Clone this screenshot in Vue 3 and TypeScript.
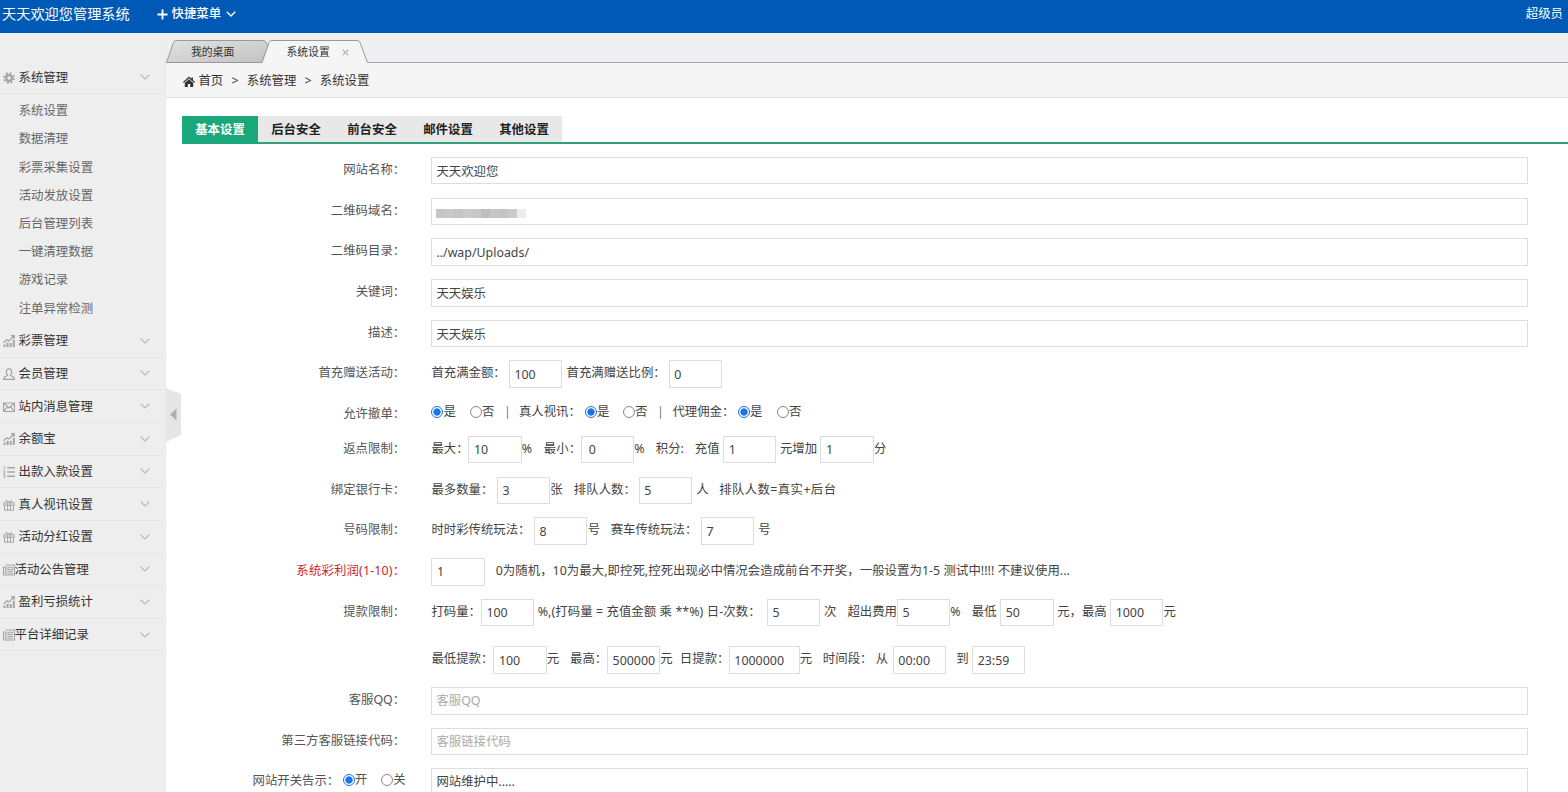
<script setup lang="ts">
type Part =
  | { k: 't'; v: string; w?: number; s?: number }
  | { k: 'i'; v: string; w: number; pad?: number; gap?: number }
  | { k: 'r'; on: boolean; v: string; w: number }
interface Row { label: string; cls?: string; full?: string; hint?: string; parts?: Part[]; mosaic?: boolean; sw?: boolean }

const t = (v: string, w?: number, s?: number): Part => ({ k: 't', v, w, s })
const i = (v: string, gap = 0, w = 53.3, pad = 4.5): Part => ({ k: 'i', v, w, pad, gap })
const r = (on: boolean, v: string, w: number): Part => ({ k: 'r', on, v, w })
const textStyle = (p: { w?: number; s?: number }) => ({
  width: p.w ? p.w + 'px' : undefined,
  letterSpacing: p.s ? p.s + 'px' : undefined,
})

const rows: Row[] = [
  { label: '网站名称：', full: '天天欢迎您' },
  { label: '二维码域名：', full: '', mosaic: true },
  { label: '二维码目录：', full: '../wap/Uploads/' },
  { label: '关键词：', full: '天天娱乐' },
  { label: '描述：', full: '天天娱乐' },
  { label: '首充赠送活动：', parts: [t('首充满金额：', 77.5), i('100', 4.4), t('首充满赠送比例：', 102.2), i('0')] },
  { label: '允许撤单：', cls: 'radio-row', parts: [
    r(true, '是', 38.5), r(false, '否', 34), t('|', 15), t('真人视讯：', 66),
    r(true, '是', 38), r(false, '否', 34), t('|', 15.5), t('代理佣金：', 65.5),
    r(true, '是', 39), r(false, '否', 30)] },
  { label: '返点限制：', parts: [t('最大：', 37), i('10'), t('%', 22.2), t('最小：', 37), i('0', 0, 53.3, 7), t('%', 21.7), t('积分:', 39), t('充值', 28.3), i('1', 3.5), t('元增加', 40.5), i('1', 0.2), t('分')] },
  { label: '绑定银行卡：', parts: [t('最多数量：', 65.5), i('3'), t('张', 23.7), t('排队人数：', 65), i('5', 4), t('人', 23), t('排队人数=真实+后台', undefined, 0.4)] },
  { label: '号码限制：', parts: [t('时时彩传统玩法：', 102.5), i('8', 0.5), t('号', 23), t('赛车传统玩法：', 90.3), i('7', 4), t('号')] },
  { label: '系统彩利润(1-10)：', cls: 'warn', parts: [i('1', 11), t('0为随机，10为最大,即控死,控死出现必中情况会造成前台不开奖，一般设置为1-5 测试中!!!! 不建议使用...', undefined, 0.05)] },
  { label: '提款限制：', cls: 'tall', parts: [t('打码量：', 49.5), i('100', 3.5), t('%,(打码量 = 充值金额 乘 **%) 日-次数：', 229.4, 0.08), i('5', 3.6), t('次', 23.5), t('超出费用', 49.5), i('5'), t('%', 21.5), t('最低', 28.5), i('50', 3.6), t('元，最高', 53), i('1000'), t('元')] },
  { label: '', parts: [t('最低提款：', 62), i('100'), t('元', 23.4), t('最高：', 37), i('500000'), t('元', 19.5), t('日提款：', 49), i('1000000', 0, 71), t('元', 23), t('时间段：', 53), t('从', 17), i('00:00', 10), t('到', 16), i('23:59')] },
  { label: '客服QQ：', full: '', hint: '客服QQ' },
  { label: '第三方客服链接代码：', full: '', hint: '客服链接代码' },
  { label: '网站开关告示：', cls: 'last', full: '网站维护中.....', sw: true },
]

interface Menu { name: string; icon: string; tight?: boolean; sub?: string[] }
const menus: Menu[] = [
  { name: '系统管理', icon: 'gear', sub: ['系统设置', '数据清理', '彩票采集设置', '活动发放设置', '后台管理列表', '一键清理数据', '游戏记录', '注单异常检测'] },
  { name: '彩票管理', icon: 'chart' },
  { name: '会员管理', icon: 'user' },
  { name: '站内消息管理', icon: 'mail' },
  { name: '余额宝', icon: 'chart' },
  { name: '出款入款设置', icon: 'list' },
  { name: '真人视讯设置', icon: 'gift' },
  { name: '活动分红设置', icon: 'gift' },
  { name: '活动公告管理', icon: 'news', tight: true },
  { name: '盈利亏损统计', icon: 'chart' },
  { name: '平台详细记录', icon: 'news', tight: true },
]
const tabs = ['基本设置', '后台安全', '前台安全', '邮件设置', '其他设置']
const mosaic = ['#c6c6c6', '#c9c9c9', '#c4c4c4', '#cacaca', '#c8c8c8', '#bdbdbd', '#c6c6c6', '#c3c3c3', '#cbcbcb', '#ececec']
</script>

<template>
  <div class="page">
    <header class="top">
      <span class="brand">天天欢迎您管理系统</span>
      <svg class="plus" viewBox="0 0 11 11"><path d="M5.5 .5v10M.5 5.5h10" /></svg>
      <b class="quick">快捷菜单</b>
      <svg class="caret" viewBox="0 0 10 6"><path d="M.8 .8L5 5 9.2 .8" /></svg>
      <span class="who">超级员</span>
    </header>
    <div class="body">
      <aside class="side">
        <template v-for="m in menus" :key="m.name">
          <div class="menu" :class="{ tight: m.tight }">
            <svg class="mi" viewBox="0 0 12 12">
              <template v-if="m.icon === 'gear'">
                <circle cx="6" cy="6" r="2.9" stroke-width="2.4" />
                <circle cx="6" cy="6" r="4.9" stroke-width="2" stroke-dasharray="1.9 1.95" />
              </template>
              <template v-else-if="m.icon === 'chart'">
                <path d="M1.5 12V9.4M4.6 12V7.8M7.7 12V8M10.8 12V4.8" stroke-width="2" />
                <path d="M.5 7.8L4 4.8 6 6 10.8 1M8 .7h3.2v3.1" stroke-width="1.2" />
              </template>
              <path v-else-if="m.icon === 'user'" stroke-width="1.2" d="M4.6 7.2C2.4 5 3 .8 6 .8s3.6 4.2 1.4 6.4c.2 1 3.9 1 4.1 4.1H.5c.2-3.1 3.9-3.1 4.1-4.1z" />
              <path v-else-if="m.icon === 'mail'" stroke-width="1.2" d="M.5 2h11v8.5H.5zM.8 2.3L6 6.8l5.2-4.5M.8 10.2L4.4 6M11.2 10.2L7.6 6" />
              <template v-else-if="m.icon === 'list'">
                <path d="M4.2 1.8H12M4.2 6H12M4.2 10.2H12" stroke-width="1.5" />
                <path d="M.6 .7h1v2.8M.3 5h1.6v.8L.5 7.3h1.6M.4 8.7h1.5v2.6H.4M.9 10h1" stroke-width=".9" />
              </template>
              <path v-else-if="m.icon === 'gift'" d="M.7 3.7h10.6v2.5H.7zM1.5 6.2v5h9v-5M4.6 3.7v7.5M7.4 3.7v7.5M5.8 3.5C4.5.5 2.7 1 3.2 3.2M6.2 3.5C7.5.5 9.3 1 8.8 3.2" />
              <template v-else>
                <path d="M2.8 1h8.7v10H1.3Q.5 11 .5 10V3h2.3v7" stroke-width="1.2" />
                <path d="M4.9 3.3h4.7v2.2H4.9zM4.4 7.4h5.4M4.4 9.2h5.4" />
              </template>
            </svg>
            <span>{{ m.name }}</span>
            <svg class="down" viewBox="0 0 10 6"><path d="M.7 .8L5 5 9.3 .8" /></svg>
          </div>
          <ul v-if="m.sub" class="sub"><li v-for="s in m.sub" :key="s">{{ s }}</li></ul>
        </template>
        <svg class="toggle" viewBox="0 0 15 54"><path d="M0 0L15 6V47L0 54z" fill="#e6e6e6" /><path d="M10.5 20.5v12L4 26.5z" fill="#b0b0b0" /></svg>
      </aside>
      <main class="main">
        <div class="wins">
          <svg class="tabshape" viewBox="0 0 220 30">
            <defs><linearGradient id="g" x1="0" y1="0" x2="1" y2="1"><stop offset="0" stop-color="#e2e2e2" /><stop offset="1" stop-color="#c2c2c2" /></linearGradient></defs>
            <path d="M.5 29.5L7.5 9.5Q8.3 7.5 10.5 7.5H97Q99.5 7.5 100.5 10L102 14 96 29.5z" fill="url(#g)" stroke="#999" />
            <path d="M96 30L103 9.5Q104 7.5 106 7.5H191Q193.2 7.5 194 9.5L201.5 30z" fill="#f5f5f5" />
            <path d="M96 29.5L103 9.5Q104 7.5 106 7.5H191Q193.2 7.5 194 9.5L201.5 29.5" fill="none" stroke="#999" />
          </svg>
          <span class="win a">我的桌面</span><span class="win b">系统设置</span>
          <svg class="x" viewBox="0 0 7 7"><path d="M.7 .7l5.6 5.6M6.3 .7L.7 6.3" /></svg>
        </div>
        <nav class="crumb">
          <svg class="home" viewBox="0 0 12 11"><path d="M6 .5L0 6.1l.8.8L6 2.2l5.2 4.7.8-.8-2-1.9V1.5H8.5v1.3z" /><path d="M6 3.2L1.8 7v4h3V8h2.4v3h3V7z" /></svg>
          <span>首页</span><span class="gt">&gt;</span><span>系统管理</span><span class="gt">&gt;</span><span>系统设置</span>
        </nav>
        <div class="tabs"><b v-for="(n, x) in tabs" :key="n" :class="{ on: x === 0 }">{{ n }}</b></div>
        <form class="form">
          <div v-for="(row, n) in rows" :key="n" class="row" :class="row.cls">
            <div class="label" :class="{ sw: row.sw }">
              <span>{{ row.label }}</span>
              <template v-if="row.sw">
                <label class="radio first"><input type="radio" name="site" checked />开</label>
                <label class="radio"><input type="radio" name="site" />关</label>
              </template>
            </div>
            <div v-if="row.parts" class="parts">
              <template v-for="(p, j) in row.parts" :key="j">
                <span v-if="p.k === 't'" class="txt" :class="{ bar: p.v === '|' }" :style="textStyle(p)">{{ p.v }}</span>
                <input v-else-if="p.k === 'i'" class="box" :value="p.v" :style="{ width: p.w + 'px', paddingLeft: p.pad + 'px', marginRight: p.gap + 'px' }" />
                <label v-else class="radio" :style="{ width: p.w + 'px' }"><input type="radio" :checked="p.on" />{{ p.v }}</label>
              </template>
            </div>
            <div v-else class="wide">
              <input class="box full" :value="row.full" :placeholder="row.hint" />
              <div v-if="row.mosaic" class="mosaic"><i v-for="(c, q) in mosaic" :key="q" :style="{ background: c }"></i></div>
            </div>
          </div>
        </form>
      </main>
    </div>
  </div>
</template>

<style>
body { margin: 0; overflow: hidden; }
</style>
<style scoped>
* { box-sizing: border-box; }
.page { width: 1568px; height: 792px; overflow: hidden; background: #fff; color: #444; font: 12.4px/20px "Noto Sans", "Noto Sans CJK SC", sans-serif; display: flex; flex-direction: column; white-space: nowrap; }
svg { display: block; fill: none; flex: none; }
.top { height: 33px; flex: none; background: #005ab5; color: #fff; display: flex; align-items: center; padding: 0 5px 5px 2px; }
.brand { font-size: 14.2px; width: 154.5px; }
.plus { width: 11px; height: 11px; stroke: #fff; stroke-width: 1.8; margin-right: 4px; }
.quick { width: 54.5px; font-weight: 500; }
.caret { width: 10px; height: 6px; stroke: #fff; stroke-width: 1.4; }
.who { margin-left: auto; }
.body { flex: 1; min-height: 0; display: flex; }
.side { position: relative; width: 166px; flex: none; background: #eee; border-right: 1px solid #e8e8e8; padding-top: 28.6px; color: #333; }
.menu { height: 32.65px; width: 163px; display: flex; align-items: center; border-bottom: 1px solid #e5e5e5; padding: .9px 0 0 2.5px; }
.mi { width: 12px; height: 12px; stroke: #a4a4a4; margin-right: 4px; }
.tight .mi { margin-right: 0; }
.down { width: 10px; height: 6px; stroke: #b8b8b8; stroke-width: 1.2; margin: -1px 13px 0 auto; }
.sub { list-style: none; margin: 0; padding: 3px 0 2.3px 18.7px; color: #666; }
.sub li { height: 28.2px; line-height: 28.2px; }
.toggle { position: absolute; left: 166px; top: 355px; width: 15px; height: 54px; }
.main { flex: 1; min-width: 0; }
.wins { position: relative; height: 30px; background: #efeef0; border-bottom: 1px solid #a5a5a5; font-size: 10.8px; color: #333; }
.tabshape { position: absolute; left: 0; top: 0; width: 220px; height: 30px; }
.win { position: absolute; top: 9px; }
.a { left: 25px; }
.b { left: 120.5px; }
.x { position: absolute; left: 176px; top: 16px; width: 7px; height: 7px; stroke: #b0b0b0; stroke-width: 1.2; }
.crumb { height: 35px; background: #f5f5f5; border-bottom: 1px solid #e2e2e2; display: flex; align-items: center; padding: 2px 0 0 16.7px; color: #333; }
.home { width: 12px; height: 11px; fill: #333; margin-right: 3.8px; }
.gt { width: 23.5px; text-align: center; }
.tabs { margin: 17.5px 0 0 16px; height: 28.5px; border-bottom: 2px solid #359e7b; display: flex; }
.tabs b { width: 76px; background: #e8e8e8; text-align: center; line-height: 27px; color: #222; font-weight: 700; }
.tabs .on { background: #1aa87b; color: #fff; height: 28px; }
.form { padding-top: 12.9px; }
.row { height: 40.73px; display: flex; align-items: flex-start; }
.radio-row { height: 34.65px; }
.tall { height: 47.6px; }
.label { width: 239.2px; margin-right: 26.2px; text-align: right; color: #555; line-height: 26px; flex: none; }
.warn .label { color: #cf2328; letter-spacing: .15px; }
.label.sw { display: flex; padding-left: 86.5px; line-height: 25px; overflow: visible; }
.last { margin-top: -.5px; }
.sw .radio { height: 24px; }
.first { margin-left: 3.5px; margin-right: 14px; }
.parts { display: flex; color: #444; }
.txt { line-height: 26px; flex: none; }
.txt.bar { color: #777; }
.box { width: 53.3px; height: 27.5px; border: 1px solid #ddd; background: #fff; padding: 0 0 0 4.5px; color: #444; font: inherit; outline: 0; flex: none; }
.full { width: 1096.5px; padding-left: 4px; }
.last .full { padding-bottom: 2px; }
.box::placeholder { color: #aaa; opacity: 1; }
.wide { position: relative; }
.mosaic { position: absolute; left: 4.5px; top: 11px; display: flex; height: 9px; }
.mosaic i { width: 9px; }
.radio { display: flex; align-items: center; flex: none; height: 21px; }
.radio input { appearance: none; width: 12px; height: 12px; border: 1px solid #888; border-radius: 50%; margin: 0; background: #fff; flex: none; }
.radio input:checked { border-color: #1a73e8; background: radial-gradient(circle, #1a73e8 3.3px, #fff 4px); }
.radio-row .txt { line-height: 21px; }
.radio-row .label { line-height: 25px; }
</style>
